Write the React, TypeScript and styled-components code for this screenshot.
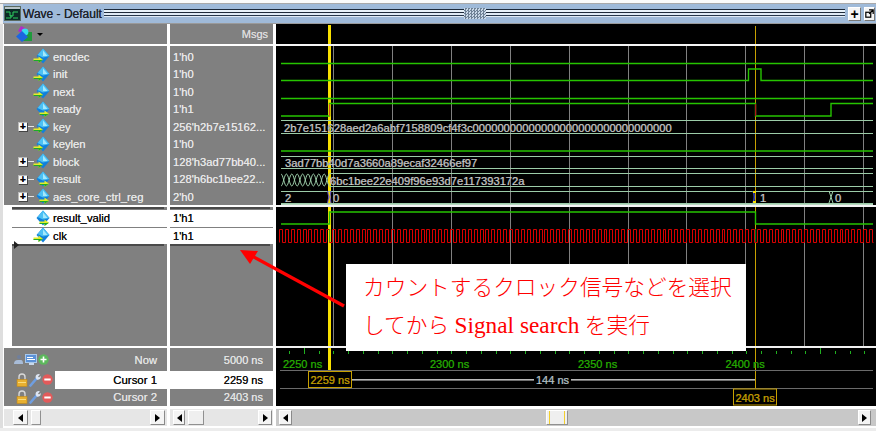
import React from "react";
import styled, { createGlobalStyle } from "styled-components";

const Global = createGlobalStyle`
  html, body { margin: 0; padding: 0; background: #f1f1f1; }
  body { width: 876px; height: 431px; overflow: hidden; font-family: "Liberation Sans", Arial, sans-serif; }
`;

const Window = styled.div`
  position: relative; width: 876px; height: 431px; display: flex; flex-direction: column; overflow: hidden; background: #ececec;
`;
const TopStrip = styled.div`
  height: 3px; background: #fbfbfb; border-bottom: 1px solid #a9a9a9; flex: none;
`;
const TitleBar = styled.div`
  height: 19px; flex: none; margin-left: 3px; background: #9fbad9; border-bottom: 1px solid #9a9a9a; display: flex; align-items: center; padding-left: 1px; gap: 2px;
`;
const TitleText = styled.span`
  font-size: 12px; color: #20242c; white-space: nowrap; margin-right: 3px; width: 76px; text-shadow: 0 0 .6px #20242c;
`;
const Grip = styled.div`
  flex: 1; height: 11px; background: linear-gradient(#9fbad9 0 1px, #1d2a3a 1px 2px, #e8f2fa 2px 4px, #1d2a3a 4px 5px, #dfeaf5 5px 7px, #26364a 7px 8px, #dfeaf5 8px 9px, #9fbad9 9px);
  display: flex; justify-content: center; margin-right: 1px;
`;
const GripThumb = styled.div`
  width: 22px; height: 11px; background: repeating-conic-gradient(#6f8296 0 25%, #c9d8e8 0 50%) 0 0 / 3px 3px;
`;
const TitleButton = styled.button<{ $w: number }>`
  width: ${(p) => p.$w}px; height: 14px; padding: 0; margin-right: 1px; flex: none; background: #f5f5f5; border: 1px solid #fff; border-right-color: #777; border-bottom-color: #777; display: flex; align-items: center; justify-content: center; font: bold 14px "Liberation Sans", sans-serif; color: #000; line-height: 1;
`;

const Panes = styled.div`
  flex: none; height: 404px; display: grid; grid-template-columns: 163px 103px 600px; column-gap: 3px; padding-left: 1px; border-left: 3px solid #dedede; background: #fff; box-sizing: border-box;
`;
const Column = styled.div`
  display: flex; flex-direction: column; min-width: 0; overflow: hidden; text-shadow: 0 0 .5px currentColor;
`;
const HeaderCell = styled.div<{ $right?: boolean }>`
  height: 20px; flex: none; margin-bottom: 2px; background: #808080; display: flex; align-items: center; padding: ${(p) => (p.$right ? "0 5px 0 0" : "0 0 0 11px")}; justify-content: ${(p) => (p.$right ? "flex-end" : "flex-start")}; color: #dcdcdc; font-size: 11px; box-sizing: border-box; gap: 4px;
`;
const DropCaret = styled.span`
  width: 0; height: 0; border: 3px solid transparent; border-top: 3px solid #000; margin-top: 4px;
`;
const SignalGroup = styled.div`
  height: 159px; flex: none; margin-bottom: 2px; background: #808080; padding-top: 2px; box-sizing: border-box; overflow: hidden;
`;
const NameRow = styled.div<{ $selected?: boolean }>`
  height: 17.5px; display: flex; align-items: center; position: relative; padding-left: 29px; font-size: 11.3px; color: ${(p) => (p.$selected ? "#101010" : "#e6e6e6")}; background: ${(p) => (p.$selected ? "#fff" : "transparent")}; white-space: nowrap; gap: 3px;
`;
const ValueRow = styled.div<{ $selected?: boolean }>`
  height: 17.5px; display: flex; align-items: center; padding-left: 3px; font-size: 11.2px; color: ${(p) => (p.$selected ? "#101010" : "#e6e6e6")}; background: ${(p) => (p.$selected ? "#fff" : "transparent")}; white-space: nowrap;
`;
const Expander = styled.span`
  position: absolute; left: 14px; top: 4px; width: 8px; height: 8px; background: #fafafa; border: 1px solid #bbb; border-right-color: #444; border-bottom-color: #444; color: #000; font: bold 10px/8px "Liberation Sans", sans-serif; text-align: center;
  &::after { content: ""; position: absolute; left: 9px; top: 3px; width: 6px; height: 1px; background: #e4e4e4; }
`;
const LowerGroup = styled.div<{ $strip?: boolean }>`
  height: 139px; flex: none; margin-bottom: 2px; background: #808080; border-left: ${(p) => (p.$strip ? "8px solid #fff" : "0")}; box-sizing: border-box; overflow: hidden;
`;
const DarkRule = styled.div<{ $marker?: boolean }>`
  height: 2px; background: #4a4a4a; margin-right: 3px; position: relative;
  ${(p) => (p.$marker ? `&::before { content: ""; position: absolute; left: 2px; top: -3px; border-left: 5px solid #222; border-top: 4px solid transparent; border-bottom: 4px solid transparent; }` : "")}
`;
const LowerList = styled.div`
  display: flex; flex-direction: column; gap: 1px; padding: 1px 0 0; background: #808080;
  & > div { height: 16.5px; }
`;
const NameInLower = styled(NameRow)`
  padding-left: 21px;
`;
const CursorPane = styled.div`
  height: 58px; flex: none; background: #808080; display: flex; flex-direction: column;
`;
const NowRow = styled.div`
  height: 23px; flex: none; display: flex; align-items: center; font-size: 11.2px; color: #e2e2e2; padding: 0 10px 0 9px;
`;
const IconCluster = styled.span`
  display: flex; align-items: center; gap: 1px; flex: none;
`;
const Label = styled.span`
  margin-left: auto;
`;
const CursorRow = styled.div`
  height: 17.5px; flex: none; display: flex; align-items: center; font-size: 11.4px; padding-left: 12px;
`;
const CursorLabel = styled.div<{ $active?: boolean }>`
  margin-left: 2px; flex: 1; height: 100%; display: flex; align-items: center; justify-content: flex-end; padding-right: 10px; background: ${(p) => (p.$active ? "#fff" : "transparent")}; color: ${(p) => (p.$active ? "#111" : "#e2e2e2")};
`;
const TimeRow = styled.div<{ $active?: boolean }>`
  height: 17.5px; flex: none; display: flex; align-items: center; justify-content: flex-end; padding-right: 10px; font-size: 11px; background: ${(p) => (p.$active ? "#fff" : "transparent")}; color: ${(p) => (p.$active ? "#111" : "#e2e2e2")};
`;
const NowTime = styled(TimeRow)`
  height: 23px;
`;
const Scroll = styled.div<{ $track: string; $l: number; $r: number }>`
  margin-top: 3px; height: 17px; flex: none; display: flex; align-items: center; padding: 0 ${(p) => p.$r}px 0 ${(p) => p.$l}px; background: ${(p) => p.$track};
`;
const ScrollBtn = styled.span<{ $w: number }>`
  width: ${(p) => p.$w}px; height: 15px; flex: none; box-sizing: border-box; background: #f4f4f4; border: 1px solid #fff; border-right-color: #8a8a8a; border-bottom-color: #8a8a8a; display: flex; align-items: center; justify-content: center;
`;
const Tri = styled.span<{ $right?: boolean }>`
  width: 0; height: 0; border-top: 4px solid transparent; border-bottom: 4px solid transparent; ${(p) => (p.$right ? "border-left: 5px solid #000;" : "border-right: 5px solid #000;")}
`;
const ScrollTrack = styled.span<{ $gap: number }>`
  flex: 1; display: flex; padding-left: ${(p) => p.$gap}px;
`;
const Thumb = styled.span<{ $w: number; $mark?: boolean }>`
  width: ${(p) => p.$w}px; height: 15px; box-sizing: border-box; background: #efefef; border: 1px solid #fff; border-right-color: #909090; border-bottom-color: #909090;
  ${(p) => (p.$mark ? "box-shadow: inset 2px 0 0 #efefef, inset 3px 0 0 #f2cf2e, inset -2px 0 0 #efefef, inset -3px 0 0 #f2cf2e;" : "")}
`;
const WaveCanvas = styled.svg`
  display: block; width: 600px; height: 382px; flex: none; background: #000;
`;
const Callout = styled.div`
  position: absolute; left: 346px; top: 264px; width: 400px; height: 87px; box-sizing: border-box; background: #fff; padding: 6px 0 0 17px; color: #f00; font-family: "Liberation Serif", "Noto Sans CJK JP", serif; font-size: 21.7px; font-weight: 300; line-height: 37px; white-space: nowrap;
`;
const LatinRun = styled.span`
  font-size: 23.3px; font-weight: 400;
`;
const ArrowOverlay = styled.svg`
  position: absolute; left: 236px; top: 246px; width: 112px; height: 64px; pointer-events: none;
`;

function SignalIcon({ out }: { out?: boolean }) {
  return (
    <svg width="17" height="17" viewBox="0 0 17 17" style={{ flex: "none" }}>
      <path d="M10 0.5 L16.5 8 L10 15.5 L3.5 8 Z" fill="#1080dc" />
      <path d="M10 0.5 L16.5 8 L10 9.5 L4.5 7 Z" fill="#4cc0f4" />
      <path d="M10 2.5 L14.5 8 L10 8 Z" fill="#a4e8fc" />
      {out ? (
        <>
          <path d="M6.5 11.5 H11.5 V9.5 L16 12.8 L11.5 16 V14 H6.5 Z" fill="#e4ee2a" />
          <path d="M6.5 13 H13 L16 12.8 L11.5 16 V14 H6.5 Z" fill="#1fa82a" />
        </>
      ) : (
        <>
          <path d="M0.5 10.5 H5.5 V8.5 L10 11.8 L5.5 15 V13 H0.5 Z" fill="#e4ee2a" />
          <path d="M0.5 12 H7 L10 11.8 L5.5 15 V13 H0.5 Z" fill="#1fa82a" />
        </>
      )}
    </svg>
  );
}
function ToolIcon() {
  return (
    <svg width="18" height="18" viewBox="0 0 18 18">
      <rect x="8" y="7" width="9" height="9" fill="#1f9a3c" />
      <path d="M6 1 L12 4 L8 9 L3 6 Z" fill="#b02cc8" />
      <circle cx="10" cy="7" r="3.4" fill="#35dcec" />
      <path d="M7 6 L13 12 L7 17 L1 11.5 Z" fill="#1c66e0" />
    </svg>
  );
}
function WindowIcon() {
  return (
    <svg width="17" height="15" viewBox="0 0 17 15" style={{ flex: "none" }}>
      <rect x=".5" y=".5" width="16" height="14" fill="#0c2a26" stroke="#5a6a60" />
      <rect x="1" y="1" width="15" height="2" fill="#b8c4c8" />
      <path d="M2 6 H6 V10 H9 V6 H14 M2 12 H7 V9 M9 12 H14" fill="none" stroke="#2ed060" strokeWidth="1" />
    </svg>
  );
}
function Lock() {
  return (
    <svg width="12" height="14" viewBox="0 0 12 14">
      <path d="M3 7 V4 a3 3 0 0 1 6 0 V7" fill="none" stroke="#d8d8d8" strokeWidth="1.4" />
      <rect x="1" y="6.5" width="10" height="7" fill="#e8b030" stroke="#c08818" strokeWidth=".6" />
      <rect x="2" y="9" width="8" height="1" fill="#f8dc80" />
    </svg>
  );
}
function Wrench() {
  return (
    <svg width="12" height="14" viewBox="0 0 12 14">
      <path d="M1.5 12.5 L8 5" stroke="#6f9ee0" strokeWidth="2.6" strokeLinecap="round" />
      <path d="M6.6 4.4 a3 3 0 0 1 4.4 -3 L9 3.4 L10 4.6 L11.6 3 a3 3 0 0 1 -4 3.6 Z" fill="#dde6f4" />
    </svg>
  );
}
function Minus() {
  return (
    <svg width="11" height="11" viewBox="0 0 11 11">
      <circle cx="5.5" cy="5.5" r="5.2" fill="#e25a5a" />
      <rect x="2.3" y="4.5" width="6.4" height="2" fill="#fff" />
    </svg>
  );
}
function NowIcons() {
  return (
    <IconCluster>
      <svg width="11" height="11" viewBox="0 0 11 11">
        <circle cx="6" cy="3" r="2" fill="#6f7f9c" />
        <path d="M1 10 Q1 6 5 6 L8 6 Q10 6 10 10 Z" fill="#a8bcd8" />
      </svg>
      <svg width="12" height="11" viewBox="0 0 12 11">
        <rect x=".5" y=".5" width="11" height="8" fill="#5c92d8" stroke="#a8c8ec" />
        <rect x="2" y="3" width="6" height="1" fill="#fff" />
        <rect x="2" y="5" width="8" height="1" fill="#fff" />
        <rect x="4" y="9" width="5" height="2" fill="#c8d8ec" />
      </svg>
      <svg width="11" height="11" viewBox="0 0 11 11">
        <circle cx="5.5" cy="5.5" r="5.2" fill="#5cb85c" />
        <path d="M5.5 2.5 V8.5 M2.5 5.5 H8.5" stroke="#fff" strokeWidth="1.6" />
      </svg>
    </IconCluster>
  );
}
function CursorIcons() {
  return (
    <IconCluster>
      <Lock />
      <Wrench />
      <Minus />
    </IconCluster>
  );
}
function ScrollBar(p: { track: string; l: number; r: number; wL: number; wR: number; gap: number; thumb: number; mark?: boolean }) {
  return (
    <Scroll $track={p.track} $l={p.l} $r={p.r}>
      <ScrollBtn $w={p.wL}><Tri /></ScrollBtn>
      <ScrollTrack $gap={p.gap}><Thumb $w={p.thumb} $mark={p.mark} /></ScrollTrack>
      <ScrollBtn $w={p.wR}><Tri $right /></ScrollBtn>
    </Scroll>
  );
}

const signals = [
  { name: "encdec", value: "1'h0" },
  { name: "init", value: "1'h0" },
  { name: "next", value: "1'h0" },
  { name: "ready", value: "1'h1", out: true },
  { name: "key", value: "256'h2b7e15162...", exp: true },
  { name: "keylen", value: "1'h0" },
  { name: "block", value: "128'h3ad77bb40...", exp: true },
  { name: "result", value: "128'h6bc1bee22...", exp: true, out: true },
  { name: "aes_core_ctrl_reg", value: "2'h0", exp: true, out: true },
];

const GREEN = "#26c400";
const BUS = "#9ccca8";
const X0 = 281;
const X1 = 873;
const C1 = 329.5;
const C2 = 755.5;

function clockPath() {
  let d = "M279.5 242.5";
  let x = 279;
  let high = false;
  while (x < X1) {
    d += ` V${high ? 242.5 : 229.5}`;
    high = !high;
    x += 2.95;
    d += ` H${Math.round(Math.min(x, X1)) + 0.5}`;
  }
  return d;
}
function crossPath() {
  let d = "";
  for (let x = X0; x < C1 - 1; x += 5.4) {
    d += `M${x.toFixed(1)} 174 C${(x + 2).toFixed(1)} 174 ${(x + 3.4).toFixed(1)} 186 ${(x + 5.4).toFixed(1)} 186 M${x.toFixed(1)} 186 C${(x + 2).toFixed(1)} 186 ${(x + 3.4).toFixed(1)} 174 ${(x + 5.4).toFixed(1)} 174 `;
  }
  return d;
}

const gridXs = Array.from({ length: 10 }, (_, i) => Math.round(333 + i * 58.9) + 0.5);
const tickXs = Array.from({ length: 41 }, (_, i) => Math.round(289 + i * 14.75) + 0.5);
const textStyle: React.CSSProperties = { fontFamily: '"Liberation Sans", Arial, sans-serif' };

function Wave() {
  return (
    <WaveCanvas viewBox="276 24 600 382">
      <g style={textStyle}>
        {gridXs.map((x) => (
          <line key={x} x1={x} x2={x} y1={46} y2={346} stroke="#808080" strokeWidth="1" />
        ))}
        <rect x={328} y={25} width={3} height={345} fill="#f8e000" />
        <line x1={C2} x2={C2} y1={26} y2={388} stroke="#c8a000" strokeWidth="1" />
        <g fill="none" stroke={GREEN} strokeWidth="1.4">
          <path d={`M${X0} 63.5 H${X1}`} />
          <path d={`M${X0} 80.5 H748.5 V69 H761 V80.5 H${X1}`} />
          <path d={`M${X0} 98.5 H${X1}`} />
          <path d={`M${X0} 116 H${C1} V103.5 H${C2} V116 H831 V103.5 H${X1}`} />
          <path d={`M${X0} 151 H${X1}`} strokeWidth="1.7" />
          <path d={`M${X0} 224 H${C1} V212 H${C2} V224 H${X1}`} />
        </g>
        <rect x={329} y={104} width={1.2} height={12} fill="#d8501c" />
        <rect x={755} y={104} width={1.2} height={12} fill="#b01818" />
        <g fill="none" stroke={BUS} strokeWidth="1">
          <path d={`M${X0} 120.5 H${X1} M${X0} 133.5 H${X1}`} />
          <path d={`M${X0} 156.5 H${X1} M${X0} 168.5 H${X1}`} />
          <path d={`M${C1} 173.5 H${X1} M${C1} 186.5 H${X1}`} />
          <path d={`M${X0} 191.5 H${X1} M${X0} 203.5 H${X1}`} />
          <path d={crossPath()} />
          <path d="M829 191 L833 203 M829 203 L833 191" />
        </g>
        <path d="M753 191 Q755.5 197 753 203" fill="none" stroke="#3848c8" strokeWidth="1.4" />
        <path d="M327.5 191 Q330 197 327.5 203 M331 191 Q329 197 331 203" fill="none" stroke="#5a48c8" strokeWidth="1" />
        <rect x={753} y={191} width={3} height={2} fill="#f8e000" />
        <rect x={753} y={201} width={3} height={2} fill="#f8e000" />
        <path d={clockPath()} fill="none" stroke="#d80000" strokeWidth="1" />
        <rect x={329} y={229} width={1.2} height={13} fill="#48b010" />
        <rect x={755} y={229} width={1.2} height={13} fill="#087a20" />
        <g fill="#e8e8e8" stroke="#e8e8e8" strokeWidth=".2" fontSize="11.2">
          <text x="284" y="131.5">2b7e151628aed2a6abf7158809cf4f3c00000000000000000000000000000000</text>
          <text x="285" y="166.5">3ad77bb40d7a3660a89ecaf32466ef97</text>
          <text x="330" y="184.5">6bc1bee22e409f96e93d7e117393172a</text>
          <text x="285" y="202">2</text>
          <text x="333" y="202">0</text>
          <text x="760" y="202">1</text>
          <text x="835" y="202">0</text>
        </g>
        <rect x={276} y={44} width={600} height={2} fill="#f4f4f4" />
        <rect x={276} y={205} width={600} height={2} fill="#f4f4f4" />
        <rect x={281} y={204} width={592} height={1} fill="#b8d8c0" />
        <rect x={276} y={346} width={600} height={2} fill="#f0f0f0" />
        {tickXs.map((x, i) => (
          <line key={x} x1={x} x2={x} y1={i === 1 || i === 36 ? 348 : 351} y2={354} stroke="#20b020" strokeWidth="1" />
        ))}
        <rect x={280} y={370} width={593} height={1} fill="#6a6a6a" />
        <rect x={280} y={388} width={593} height={1} fill="#6a6a6a" />
        <rect x={328} y={348} width={3} height={22} fill="#f8e000" />
        <g fill="#2fd000" stroke="#2fd000" strokeWidth=".2" fontSize="11">
          <text x="283" y="368">2250 ns</text>
          <text x="430" y="368">2300 ns</text>
          <text x="578" y="368">2350 ns</text>
          <text x="725.5" y="368">2400 ns</text>
        </g>
        <rect x={352} y={379} width={403} height={1.6} fill="#b8b8b8" />
        <rect x={534} y={373} width={37} height={14} fill="#000" />
        <text x="536" y="384" fill="#d8e0e8" stroke="#d8e0e8" strokeWidth=".2" fontSize="11">144 ns</text>
        <rect x={308.5} y={371.5} width={43} height={16} fill="#000" stroke="#c8a000" />
        <text x="310.5" y="384" fill="#e8c000" stroke="#e8c000" strokeWidth=".2" fontSize="11">2259 ns</text>
        <rect x={733.5} y={389} width={43} height={16} fill="#000" stroke="#c8a000" />
        <text x="735.5" y="402" fill="#e8c000" stroke="#e8c000" strokeWidth=".2" fontSize="11">2403 ns</text>
      </g>
    </WaveCanvas>
  );
}

export default function App() {
  return (
    <Window>
      <Global />
      <TopStrip />
      <TitleBar>
        <WindowIcon />
        <TitleText>Wave - Default</TitleText>
        <Grip><GripThumb /></Grip>
        <TitleButton $w={13}>+</TitleButton>
        <TitleButton $w={11}>
          <svg width="9" height="9" viewBox="0 0 11 11">
            <rect x="1" y="4" width="6" height="6" fill="none" stroke="#000" strokeWidth="1.5" />
            <path d="M5 1 H10 V6 M5 6 L10 1" fill="none" stroke="#000" strokeWidth="1.5" />
          </svg>
        </TitleButton>
      </TitleBar>
      <Panes>
        <Column>
          <HeaderCell>
            <ToolIcon />
            <DropCaret />
          </HeaderCell>
          <SignalGroup>
            {signals.map((s) => (
              <NameRow key={s.name}>
                {s.exp && <Expander>+</Expander>}
                <SignalIcon out={s.out} />
                {s.name}
              </NameRow>
            ))}
          </SignalGroup>
          <LowerGroup $strip>
            <DarkRule />
            <LowerList>
              <NameInLower $selected><SignalIcon out />result_valid</NameInLower>
              <NameInLower $selected><SignalIcon />clk</NameInLower>
            </LowerList>
            <DarkRule $marker />
          </LowerGroup>
          <CursorPane>
            <NowRow><NowIcons /><Label>Now</Label></NowRow>
            <CursorRow><CursorIcons /><CursorLabel $active>Cursor 1</CursorLabel></CursorRow>
            <CursorRow><CursorIcons /><CursorLabel>Cursor 2</CursorLabel></CursorRow>
          </CursorPane>
          <ScrollBar track="#e6e6e6" l={9} r={2} wL={15} wR={15} gap={3} thumb={10} />
        </Column>
        <Column>
          <HeaderCell $right>Msgs</HeaderCell>
          <SignalGroup>
            {signals.map((s) => (
              <ValueRow key={s.name}>{s.value}</ValueRow>
            ))}
          </SignalGroup>
          <LowerGroup>
            <DarkRule />
            <LowerList>
              <ValueRow $selected>1'h1</ValueRow>
              <ValueRow $selected>1'h1</ValueRow>
            </LowerList>
            <DarkRule />
          </LowerGroup>
          <CursorPane>
            <NowTime>5000 ns</NowTime>
            <TimeRow $active>2259 ns</TimeRow>
            <TimeRow>2403 ns</TimeRow>
          </CursorPane>
          <ScrollBar track="#e6e6e6" l={3} r={1} wL={12} wR={14} gap={3} thumb={16} />
        </Column>
        <Column>
          <Wave />
          <ScrollBar track="#c8c8c8" l={3} r={5} wL={13} wR={13} gap={254} thumb={22} mark />
        </Column>
      </Panes>
      <ArrowOverlay viewBox="236 246 112 64">
        <path d="M344 306 L252 256" stroke="#f00" strokeWidth="3.4" />
        <path d="M240 250 L258 251 L250 264 Z" fill="#f00" />
      </ArrowOverlay>
      <Callout>
        カウントするクロック信号などを選択<br />
        してから <LatinRun>Signal search</LatinRun> を実行
      </Callout>
    </Window>
  );
}
